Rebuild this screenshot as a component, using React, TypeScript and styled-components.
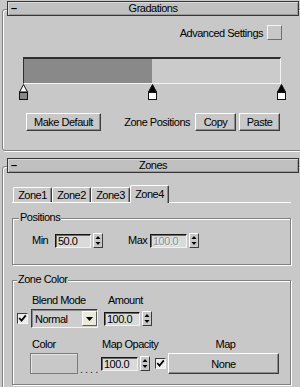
import React from 'react';
import styled, { createGlobalStyle } from 'styled-components';

const Global = createGlobalStyle`
  html, body { margin: 0; padding: 0; background: #c8c8c8; }
  body {
    width: 300px; height: 387px; overflow: hidden;
    font-family: "Liberation Sans", Arial, sans-serif;
    font-size: 11px; letter-spacing: -0.5px; color: #000;
  }
`;

const Page = styled.div`
  width: 300px;
  height: 387px;
  overflow: hidden;
  padding-top: 1px;
  box-sizing: border-box;
  background: #c8c8c8;
`;

const Rollout = styled.section`
  margin-left: 2px;
  width: 310px;
  display: flex;
  flex-direction: column;
  & + & { margin-top: 7px; }
`;

const RolloutHeader = styled.div`
  position: relative;
  z-index: 1;
  margin-left: 5px;
  width: 292px;
  height: 15px;
  box-sizing: border-box;
  border: 1px solid #363636;
  box-shadow: inset 1px 1px 0 #dcdcdc, inset -1px -1px 0 #9a9a9a;
  background: #c0c0c0;
  display: grid;
  grid-template-columns: 1fr auto 1fr;
  align-items: center;
  line-height: 13px;
`;

const Minus = styled.span`
  justify-self: start;
  margin-left: 3px;
  font-weight: bold;
`;

const Title = styled.span`
  text-align: center;
`;

const Frame = styled.div<{ $h: number }>`
  margin-top: -7px;
  padding-top: 7px;
  height: ${p => p.$h}px;
  box-sizing: border-box;
  border: 1px solid #808080;
  border-radius: 3px;
  box-shadow: inset 1px 1px 0 #fff, 1px 1px 0 #fff;
`;

const GradInner = styled.div`
  margin-left: 20px;
  width: 259px;
  display: flex;
  flex-direction: column;
`;

const AdvRow = styled.div`
  margin-top: 8px;
  height: 15px;
  display: flex;
  align-items: center;
  justify-content: flex-end;
  gap: 4px;
`;

const CheckButton = styled.div`
  width: 15px;
  height: 15px;
  box-sizing: border-box;
  border: 1px solid;
  border-color: #f4f4f4 #6e6e6e #6e6e6e #f4f4f4;
  background: #c8c8c8;
`;

const GradientBar = styled.div<{ $split: number }>`
  margin-top: 17px;
  width: 258px;
  height: 27px;
  box-sizing: border-box;
  border-style: solid;
  border-width: 2px 1px 1px 1px;
  border-color: #2e2e2e #f4f4f4 #f4f4f4 #2e2e2e;
  background: linear-gradient(to right, #898989 ${p => p.$split}%, #cbcbcb ${p => p.$split}%);
`;

const MarkerTrack = styled.div`
  position: relative;
  width: 258px;
  height: 16px;
`;

const MarkerWrap = styled.div`
  position: absolute;
  top: 0;
  width: 9px;
  height: 16px;
  display: flex;
`;

const ButtonRow = styled.div`
  margin-top: 13px;
  height: 18px;
  display: flex;
  align-items: center;
`;

const Button = styled.div<{ $w: number; $ml?: number; $h?: number }>`
  width: ${p => p.$w}px;
  margin-left: ${p => p.$ml ?? 0}px;
  height: ${p => p.$h ?? 18}px;
  box-sizing: border-box;
  border: 1px solid;
  border-color: #fff #3c3c3c #3c3c3c #fff;
  box-shadow: inset -1px -1px 0 #8a8a8a;
  background: #c8c8c8;
  display: flex;
  align-items: center;
  justify-content: center;
  flex: none;
`;

const RowText = styled.span`
  margin-left: auto;
  white-space: nowrap;
`;

const ZonesInner = styled.div`
  margin-left: 9px;
  width: 279px;
  display: flex;
  flex-direction: column;
`;

const TabStrip = styled.div`
  margin-top: 11px;
  height: 18px;
  padding-left: 1px;
  display: flex;
  align-items: flex-end;
  box-shadow: inset 0 -1px 0 #fff;
`;

const Tab = styled.div<{ $active?: boolean }>`
  width: 39px;
  height: ${p => (p.$active ? 18 : 15)}px;
  margin-bottom: ${p => (p.$active ? 0 : 1)}px;
  box-sizing: border-box;
  border-top: 1px solid #fff;
  border-left: 1px solid #fff;
  border-right: 1px solid #3c3c3c;
  box-shadow: inset -1px 0 0 #8a8a8a;
  border-radius: 2px 2px 0 0;
  background: #c8c8c8;
  display: flex;
  align-items: center;
  justify-content: center;
  padding-bottom: ${p => (p.$active ? 2 : 0)}px;
`;

const GroupBox = styled.div<{ $h: number; $mt: number }>`
  margin-top: ${p => p.$mt}px;
  height: ${p => p.$h}px;
  box-sizing: border-box;
  border: 1px solid #808080;
  box-shadow: inset 1px 1px 0 #fff, 1px 1px 0 #fff;
  display: flex;
  flex-direction: column;
`;

const GroupLabel = styled.div<{ $ml: number }>`
  align-self: flex-start;
  margin: -8px 0 0 ${p => p.$ml}px;
  padding: 0 1px;
  height: 13px;
  line-height: 13px;
  background: #c8c8c8;
`;

const Row = styled.div<{ $mt: number; $h: number; $pl?: number }>`
  margin-top: ${p => p.$mt}px;
  height: ${p => p.$h}px;
  padding-left: ${p => p.$pl ?? 0}px;
  display: flex;
  align-items: center;
`;

const FieldLabel = styled.span<{ $w: number; $ml?: number; $center?: boolean }>`
  flex: none;
  width: ${p => p.$w}px;
  margin-left: ${p => p.$ml ?? 0}px;
  text-align: ${p => (p.$center ? 'center' : 'left')};
  white-space: nowrap;
  line-height: 13px;
`;

const Field = styled.div<{ $w: number; $ml?: number; $disabled?: boolean }>`
  flex: none;
  width: ${p => p.$w}px;
  margin-left: ${p => p.$ml ?? 0}px;
  height: 14px;
  box-sizing: border-box;
  border: 1px solid;
  border-color: #161616 #f2f2f2 #f2f2f2 #161616;
  box-shadow: inset 1px 1px 0 #6a6a6a;
  background: #dadada;
  padding-left: 2px;
  line-height: 12px;
  color: ${p => (p.$disabled ? '#8e8e8e' : '#000')};
  text-shadow: ${p => (p.$disabled ? '1px 1px 0 #f4f4f4' : 'none')};
`;

const ArrowBox = styled.div`
  flex: none;
  width: 10px;
  height: 15px;
  margin-left: 2px;
  box-sizing: border-box;
  border: 1px solid;
  border-color: #fff #3c3c3c #3c3c3c #fff;
  background: #c8c8c8;
  display: flex;
`;

const Check = styled.div<{ $ml: number }>`
  flex: none;
  width: 11px;
  height: 11px;
  margin-left: ${p => p.$ml}px;
  box-sizing: border-box;
  border: 1px solid;
  border-color: #3c3c3c #f4f4f4 #f4f4f4 #3c3c3c;
  background: #ececec;
  display: flex;
`;

const Select = styled.div`
  flex: none;
  width: 67px;
  height: 19px;
  margin-left: 3px;
  box-sizing: border-box;
  border: 1px solid;
  border-color: #3c3c3c #f4f4f4 #f4f4f4 #3c3c3c;
  box-shadow: inset 1px 1px 0 #8a8a8a;
  background: #cecece;
  display: flex;
  align-items: center;
  padding-left: 3px;
`;

const SelectButton = styled.div`
  margin-left: auto;
  width: 15px;
  height: 15px;
  box-sizing: border-box;
  border: 1px solid;
  border-color: #fff #5a5a5a #5a5a5a #fff;
  background: #ecebdb;
  display: flex;
  align-items: center;
  justify-content: center;
`;

const Swatch = styled.div`
  flex: none;
  width: 48px;
  height: 21px;
  margin-left: 17px;
  box-sizing: border-box;
  border: 1px solid #7a7a7a;
  box-shadow: inset 1px 1px 0 #e6e6e6;
  background: #c8c8c8;
`;

const Dots = styled.span`
  flex: none;
  align-self: flex-end;
  width: 20px;
  margin-left: 2px;
  letter-spacing: 2px;
  line-height: 10px;
  color: #222;
`;

function SpinArrows() {
  return (
    <ArrowBox>
      <svg width="8" height="13" viewBox="0 0 8 13">
        <path d="M1.5 5 L4 2 L6.5 5 Z" fill="#000" />
        <path d="M1.5 8 L4 11 L6.5 8 Z" fill="#000" />
      </svg>
    </ArrowBox>
  );
}

function CheckMark({ ml }: { ml: number }) {
  return (
    <Check $ml={ml}>
      <svg width="9" height="9" viewBox="0 0 9 9">
        <path d="M1.2 4 L3.5 6.6 L7.8 1.4" fill="none" stroke="#000" strokeWidth="1.7" />
      </svg>
    </Check>
  );
}

function Marker({ active }: { active: boolean }) {
  return (
    <svg width="9" height="16" viewBox="0 0 9 16">
      <path d="M4.5 0.5 L8.5 8 L0.5 8 Z" fill={active ? '#000' : '#f4f4f4'} stroke="#111" />
      <rect x="0.5" y="8.5" width="8" height="7" fill={active ? '#fff' : '#888'} stroke="#111" />
    </svg>
  );
}

const markers = [
  { pos: 0, active: false },
  { pos: 0.5, active: true },
  { pos: 1, active: true },
];

const tabs = ['Zone1', 'Zone2', 'Zone3', 'Zone4'];

export default function App() {
  return (
    <>
      <Global />
      <Page>
        <Rollout>
          <RolloutHeader>
            <Minus>–</Minus>
            <Title>Gradations</Title>
            <span />
          </RolloutHeader>
          <Frame $h={142}>
            <GradInner>
              <AdvRow>
                <span>Advanced Settings</span>
                <CheckButton />
              </AdvRow>
              <GradientBar $split={50} />
              <MarkerTrack>
                {markers.map((m, i) => (
                  <MarkerWrap key={i} style={{ left: `${m.pos * 258 - 4}px` }}>
                    <Marker active={m.active} />
                  </MarkerWrap>
                ))}
              </MarkerTrack>
              <ButtonRow>
                <Button $w={75} $ml={3}>Make Default</Button>
                <RowText>Zone Positions</RowText>
                <Button $w={41} $ml={5}>Copy</Button>
                <Button $w={41} $ml={3}>Paste</Button>
                <span style={{ width: 2, flex: 'none' }} />
              </ButtonRow>
            </GradInner>
          </Frame>
        </Rollout>

        <Rollout>
          <RolloutHeader>
            <Minus>–</Minus>
            <Title>Zones</Title>
            <span />
          </RolloutHeader>
          <Frame $h={240}>
            <ZonesInner>
              <TabStrip>
                {tabs.map(t => (
                  <Tab key={t} $active={t === 'Zone4'}>{t}</Tab>
                ))}
              </TabStrip>

              <GroupBox $mt={15} $h={47}>
                <GroupLabel $ml={6}>Positions</GroupLabel>
                <Row $mt={9} $h={15} $pl={19}>
                  <FieldLabel $w={23}>Min</FieldLabel>
                  <Field $w={36}>50.0</Field>
                  <SpinArrows />
                  <FieldLabel $w={22} $ml={25}>Max</FieldLabel>
                  <Field $w={37} $disabled>100.0</Field>
                  <SpinArrows />
                </Row>
              </GroupBox>

              <GroupBox $mt={15} $h={105}>
                <GroupLabel $ml={4}>Zone Color</GroupLabel>
                <Row $mt={8} $h={13} $pl={19}>
                  <FieldLabel $w={76}>Blend Mode</FieldLabel>
                  <FieldLabel $w={50}>Amount</FieldLabel>
                </Row>
                <Row $mt={2} $h={19}>
                  <CheckMark ml={4} />
                  <Select>
                    Normal
                    <SelectButton>
                      <svg width="7" height="4" viewBox="0 0 7 4">
                        <path d="M0 0 L7 0 L3.5 4 Z" fill="#000" />
                      </svg>
                    </SelectButton>
                  </Select>
                  <Field $w={36} $ml={6}>100.0</Field>
                  <SpinArrows />
                </Row>
                <Row $mt={10} $h={13} $pl={19}>
                  <FieldLabel $w={70}>Color</FieldLabel>
                  <FieldLabel $w={68}>Map Opacity</FieldLabel>
                  <FieldLabel $w={111} $center>Map</FieldLabel>
                </Row>
                <Row $mt={2} $h={21}>
                  <Swatch />
                  <Dots>....</Dots>
                  <Field $w={37} $ml={1}>100.0</Field>
                  <SpinArrows />
                  <CheckMark ml={5} />
                  <Button $w={111} $ml={2} $h={21}>None</Button>
                </Row>
              </GroupBox>
            </ZonesInner>
          </Frame>
        </Rollout>
      </Page>
    </>
  );
}
